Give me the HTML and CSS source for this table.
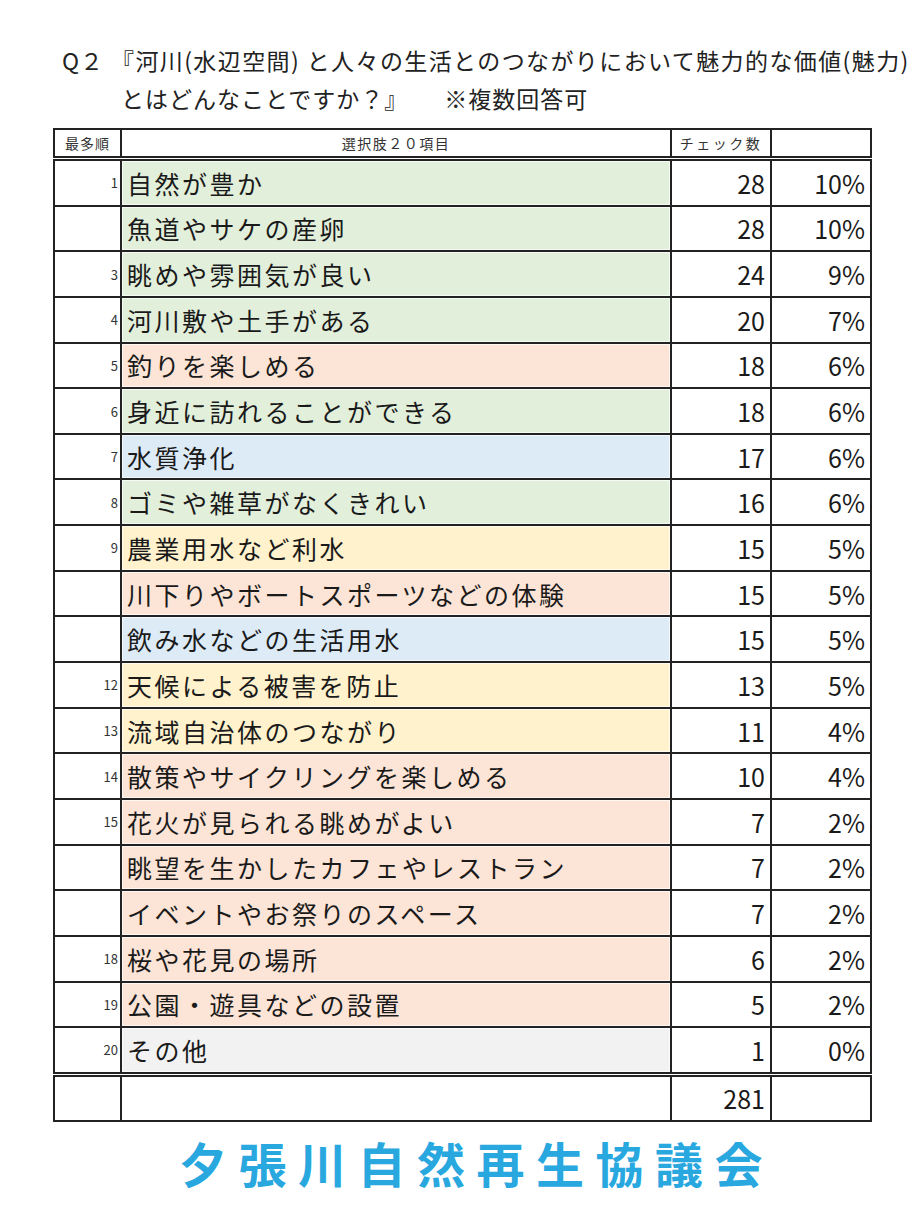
FILE: index.html
```html
<!DOCTYPE html>
<html lang="ja">
<head>
<meta charset="utf-8">
<link rel="stylesheet" href="styles.css">
</head>
<body>
<div class="page">
  <div class="title">
    <div class="line1"><span class="q">Q２</span><span class="qt">『河川(水辺空間) と人々の生活とのつながりにおいて魅力的な価値(魅力)</span></div>
    <div class="line2">とはどんなことですか？』<span class="note">※複数回答可</span></div>
  </div>
  <table class="survey">
    <colgroup><col class="c-rank"><col class="c-item"><col class="c-count"><col class="c-pct"></colgroup>
    <thead>
      <tr><th class="h-rank">最多順</th><th class="h-item">選択肢２０項目</th><th class="h-count">チェック数</th><th></th></tr>
    </thead>
    <tbody>
      <tr><td class="rank">1</td><td class="item green">自然が豊か</td><td class="num">28</td><td class="num">10%</td></tr>
      <tr><td class="rank"></td><td class="item green">魚道やサケの産卵</td><td class="num">28</td><td class="num">10%</td></tr>
      <tr><td class="rank">3</td><td class="item green">眺めや雰囲気が良い</td><td class="num">24</td><td class="num">9%</td></tr>
      <tr><td class="rank">4</td><td class="item green">河川敷や土手がある</td><td class="num">20</td><td class="num">7%</td></tr>
      <tr><td class="rank">5</td><td class="item peach">釣りを楽しめる</td><td class="num">18</td><td class="num">6%</td></tr>
      <tr><td class="rank">6</td><td class="item green">身近に訪れることができる</td><td class="num">18</td><td class="num">6%</td></tr>
      <tr><td class="rank">7</td><td class="item blue">水質浄化</td><td class="num">17</td><td class="num">6%</td></tr>
      <tr><td class="rank">8</td><td class="item green">ゴミや雑草がなくきれい</td><td class="num">16</td><td class="num">6%</td></tr>
      <tr><td class="rank">9</td><td class="item yellow">農業用水など利水</td><td class="num">15</td><td class="num">5%</td></tr>
      <tr><td class="rank"></td><td class="item peach">川下りやボートスポーツなどの体験</td><td class="num">15</td><td class="num">5%</td></tr>
      <tr><td class="rank"></td><td class="item blue">飲み水などの生活用水</td><td class="num">15</td><td class="num">5%</td></tr>
      <tr><td class="rank">12</td><td class="item yellow">天候による被害を防止</td><td class="num">13</td><td class="num">5%</td></tr>
      <tr><td class="rank">13</td><td class="item yellow">流域自治体のつながり</td><td class="num">11</td><td class="num">4%</td></tr>
      <tr><td class="rank">14</td><td class="item peach">散策やサイクリングを楽しめる</td><td class="num">10</td><td class="num">4%</td></tr>
      <tr><td class="rank">15</td><td class="item peach">花火が見られる眺めがよい</td><td class="num">7</td><td class="num">2%</td></tr>
      <tr><td class="rank"></td><td class="item peach">眺望を生かしたカフェやレストラン</td><td class="num">7</td><td class="num">2%</td></tr>
      <tr><td class="rank"></td><td class="item peach">イベントやお祭りのスペース</td><td class="num">7</td><td class="num">2%</td></tr>
      <tr><td class="rank">18</td><td class="item peach">桜や花見の場所</td><td class="num">6</td><td class="num">2%</td></tr>
      <tr><td class="rank">19</td><td class="item peach">公園・遊具などの設置</td><td class="num">5</td><td class="num">2%</td></tr>
      <tr class="last"><td class="rank">20</td><td class="item gray">その他</td><td class="num">1</td><td class="num">0%</td></tr>
    </tbody>
    <tfoot>
      <tr><td></td><td></td><td class="num">281</td><td></td></tr>
    </tfoot>
  </table>
  <div class="org">夕張川自然再生協議会</div>
</div>
</body>
</html>
```

FILE: styles.css
```css
html, body {
  margin: 0;
  padding: 0;
  background: #ffffff;
}

body {
  font-family: "Noto Sans CJK JP", "Noto Sans", sans-serif;
  color: #1a1a1a;
}

.page {
  width: 920px;
  height: 1227px;
  padding-top: 41px;
  box-sizing: border-box;
}

.title {
  font-size: 23px;
  line-height: 38px;
  color: #222;
}

.line1 {
  padding-left: 62px;
  display: flex;
  white-space: nowrap;
}

.q {
  width: 49px;
  letter-spacing: 1px;
}

.qt {
  letter-spacing: 1.4px;
}

.line2 {
  padding-left: 121px;
  letter-spacing: 1px;
  white-space: nowrap;
}

.note {
  margin-left: 36px;
}

.survey {
  margin: 11px 0 0 53px;
  border-collapse: collapse;
  table-layout: fixed;
  width: 817px;
  border: 2px solid #222;
}

.c-rank { width: 67px; }
.c-item { width: 550px; }
.c-count { width: 100px; }
.c-pct { width: 100px; }

.survey th,
.survey td {
  border: 2px solid #222;
  padding: 0;
}

.survey thead th {
  height: 26px;
  font-weight: normal;
  font-size: 14px;
  color: #333;
  border-bottom: 5px double #222;
}

.h-rank {
  letter-spacing: 1px;
}

.h-item {
  letter-spacing: 1.5px;
}

.h-count {
  letter-spacing: 2.5px;
}

.survey tbody td {
  height: 43.65px;
}

.survey tbody tr.last td {
  border-bottom: 5px double #222;
}

.rank {
  text-align: right;
  font-size: 13px;
  padding-right: 2px !important;
  color: #333;
}

.item {
  font-size: 25px;
  letter-spacing: 2.5px;
  padding-left: 5px !important;
  white-space: nowrap;
  box-shadow: inset 0 0 0 1px rgba(255, 255, 255, 0.7);
  border-right-width: 1px !important;
}

.num {
  text-align: right;
  font-size: 25px;
  padding-right: 5px !important;
}

.green { background: #e2efda; }
.peach { background: #fce4d6; }
.blue { background: #ddebf7; }
.yellow { background: #fff2cc; }
.gray { background: #f2f2f2; }

.survey tfoot td {
  height: 43px;
}

.org {
  margin-top: 10px;
  padding-left: 179px;
  font-size: 48px;
  font-weight: bold;
  letter-spacing: 11.5px;
  line-height: 60px;
  color: #29a7df;
  white-space: nowrap;
}
```
